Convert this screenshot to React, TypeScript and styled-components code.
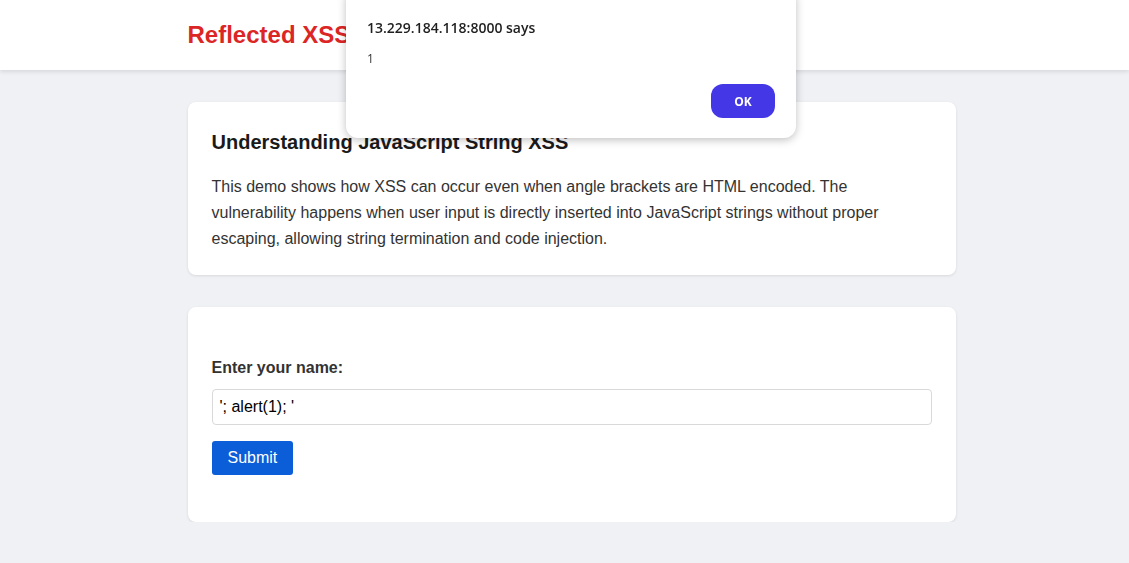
import styled, { createGlobalStyle } from 'styled-components';

const GlobalStyle = createGlobalStyle`
  html, body {
    margin: 0;
    padding: 0;
    background: #f0f1f5;
    font-family: "Liberation Sans", Arial, sans-serif;
    color: #333;
  }
`;

const Header = styled.header`
  height: 70px;
  background: #fff;
  box-shadow: 0 2px 4px rgba(0, 0, 0, 0.1);
`;

const HeaderInner = styled.div`
  width: 768px;
  height: 100%;
  margin-left: calc(50% - 377px);
  display: flex;
  align-items: center;
`;

const Title = styled.h1`
  margin: 0;
  font-size: 24px;
  font-weight: bold;
  color: #dc2626;
`;

const Main = styled.main`
  width: 768px;
  margin: 32px 0 0 calc(50% - 377px);
  display: flex;
  flex-direction: column;
  gap: 32px;
`;

const Card = styled.section`
  background: #fff;
  border-radius: 8px;
  padding: 24px 24px 23px;
  box-shadow: 0 1px 3px rgba(0, 0, 0, 0.1);
`;

const CardTitle = styled.h2`
  margin: 5px 0 20px;
  font-size: 20px;
  font-weight: bold;
  color: #1a1a1a;
`;

const Text = styled.p`
  margin: 0;
  font-size: 16px;
  line-height: 26px;
  color: #333;
`;

const Form = styled.form`
  margin: 28px 0 24px;
  display: flex;
  flex-direction: column;
  align-items: flex-start;
`;

const Label = styled.label`
  font-size: 16px;
  font-weight: bold;
  color: #333;
  margin-bottom: 12px;
`;

const Input = styled.input`
  box-sizing: border-box;
  width: 100%;
  height: 36px;
  padding: 0 7px;
  border: 1px solid #d9d9d9;
  border-radius: 4px;
  font-family: "Liberation Sans", Arial, sans-serif;
  font-size: 16px;
  color: #000;
  margin-bottom: 16px;
`;

const Button = styled.button`
  height: 34px;
  padding: 0 16px;
  border: none;
  border-radius: 3px;
  background: #0b5ed7;
  color: #fff;
  font-family: "Liberation Sans", Arial, sans-serif;
  font-size: 16px;
`;

const Dialog = styled.div`
  position: fixed;
  top: -12px;
  left: 346px;
  width: 450px;
  height: 150px;
  box-sizing: border-box;
  padding: 30px 21px 0;
  background: #fff;
  border-radius: 12px;
  box-shadow: 0 2px 8px rgba(0, 0, 0, 0.25);
  font-family: "Open Sans", "Noto Sans", sans-serif;
`;

const DialogTitle = styled.div`
  font-size: 14px;
  font-weight: 600;
  color: #1f1f1f;
`;

const DialogMessage = styled.div`
  margin-top: 13px;
  font-size: 12px;
  color: #333;
`;

const DialogActions = styled.div`
  display: flex;
  justify-content: flex-end;
  margin-top: 17px;
`;

const OkButton = styled.button`
  width: 64px;
  height: 34px;
  border: none;
  border-radius: 12px;
  background: #4337e6;
  color: #fff;
  font-family: "Open Sans", "Noto Sans", sans-serif;
  font-size: 12px;
  font-weight: 700;
`;

const App = () => {
  return (
    <>
      <GlobalStyle />
      <Header>
        <HeaderInner>
          <Title>Reflected XSS in JavaScript String</Title>
        </HeaderInner>
      </Header>
      <Main>
        <Card>
          <CardTitle>Understanding JavaScript String XSS</CardTitle>
          <Text>
            This demo shows how XSS can occur even when angle brackets are HTML encoded. The
            vulnerability happens when user input is directly inserted into JavaScript strings
            without proper escaping, allowing string termination and code injection.
          </Text>
        </Card>
        <Card>
          <Form onSubmit={(e) => e.preventDefault()}>
            <Label htmlFor="name">Enter your name:</Label>
            <Input id="name" defaultValue="'; alert(1); '" />
            <Button type="submit">Submit</Button>
          </Form>
        </Card>
      </Main>
      <Dialog>
        <DialogTitle>13.229.184.118:8000 says</DialogTitle>
        <DialogMessage>1</DialogMessage>
        <DialogActions>
          <OkButton>OK</OkButton>
        </DialogActions>
      </Dialog>
    </>
  );
};

export default App;
